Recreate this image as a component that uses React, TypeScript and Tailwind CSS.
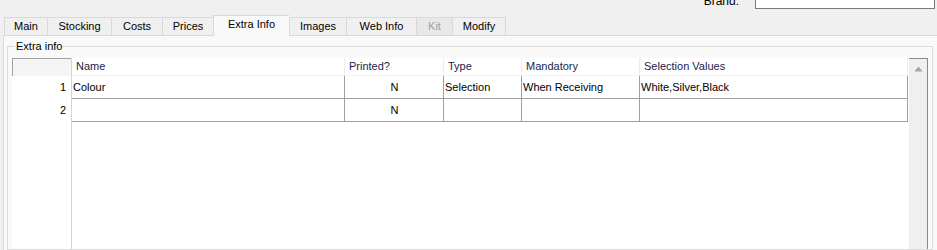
const tabs = [
  { label: 'Main', w: 'w-[43px]' },
  { label: 'Stocking', w: 'w-[64px]' },
  { label: 'Costs', w: 'w-[51px]' },
  { label: 'Prices', w: 'w-[51px]' },
  { label: 'Extra Info', w: 'w-[76px]', active: true },
  { label: 'Images', w: 'w-[57px]' },
  { label: 'Web Info', w: 'w-[70px]' },
  { label: 'Kit', w: 'w-[36px]', disabled: true },
  { label: 'Modify', w: 'w-[54px]', last: true },
]

const columns = [
  { label: 'Name', w: 'w-[273px]' },
  { label: 'Printed?', w: 'w-[99px]' },
  { label: 'Type', w: 'w-[78px]' },
  { label: 'Mandatory', w: 'w-[118px]' },
  { label: 'Selection Values', w: 'w-[268px]' },
]

const rows = [
  ['Colour', 'N', 'Selection', 'When Receiving', 'White,Silver,Black'],
  ['', 'N', '', '', ''],
]

function Tab({
  label,
  w,
  active,
  disabled,
  last,
}: {
  label: string
  w: string
  active?: boolean
  disabled?: boolean
  last?: boolean
}) {
  if (active) {
    return (
      <div
        className={`${w} relative z-10 -mb-px flex h-[21px] items-center justify-center border-l border-t border-[#d9d9d9] bg-[#f9f9f9] pb-[3px] text-black`}
      >
        {label}
      </div>
    )
  }
  return (
    <div
      className={`${w} flex h-[18px] items-center justify-center border-l border-t border-[#d9d9d9] ${
        last ? 'border-r' : ''
      } ${disabled ? 'bg-[#e8e8e8] text-[#a0a0a0]' : 'bg-[#f0f0f0] text-black'}`}
    >
      {label}
    </div>
  )
}

function ExtraInfoGrid() {
  return (
    <div className="flex h-full w-[916px] bg-white text-[11px]">
      <div className="flex w-[60px] flex-col border-r border-[#d5d5d5]">
        <div className="h-[18px] border-l border-t border-[#a0a0a0] bg-[#f5f5f5]" />
        {rows.map((_, i) => (
          <div
            key={i}
            className="flex h-[23px] items-center justify-end pr-[5px] text-black"
          >
            {i + 1}
          </div>
        ))}
      </div>
      <div className="flex w-[836px] flex-col">
        <div className="flex h-[18px] border-b border-[#f0f0f0]">
          {columns.map((c) => (
            <div
              key={c.label}
              className={`${c.w} flex items-center border-r border-[#ececec] pl-[4px] text-[#1c1c4c]`}
            >
              {c.label}
            </div>
          ))}
        </div>
        {rows.map((r, i) => (
          <div key={i} className="flex h-[23px] border-b border-[#a0a0a0]">
            {r.map((v, j) => (
              <div
                key={j}
                className={`${columns[j].w} flex items-center border-r border-[#a0a0a0] pl-[1px] text-black ${
                  j === 1 ? 'justify-center pl-0' : ''
                }`}
              >
                {v}
              </div>
            ))}
          </div>
        ))}
      </div>
      <div className="w-[1px]" />
      <div className="flex w-[19px] flex-col border-r border-t border-[#8a8a8a] bg-[#efefef]">
        <div className="flex h-[17px] items-center justify-center pt-[2px]">
          <svg width="9" height="6" viewBox="0 0 9 6">
            <path d="M4.5 0.5 L8.5 5.5 L0.5 5.5 Z" fill="#a3a3a3" />
          </svg>
        </div>
      </div>
    </div>
  )
}

export default function App() {
  return (
    <div
      className="flex h-[250px] w-[937px] flex-col overflow-hidden bg-[#f0f0f0] text-[11px]"
      style={{ fontFamily: '"Liberation Sans", Arial, sans-serif' }}
    >
      <div className="flex h-[15px] items-start justify-end overflow-hidden">
        <span className="-mt-[8px] mr-[16px] text-[12px] text-black">Brand:</span>
        <div className="mr-[2px] h-[9px] w-[180px] border-x border-b border-[#7a7a7a] bg-white" />
      </div>
      <div className="flex h-[20px] items-end pl-[4px]">
        {tabs.map((t) => (
          <Tab key={t.label} {...t} />
        ))}
      </div>
      <div className="ml-[3px] flex flex-1 flex-col border-l border-t border-[#d9d9d9] bg-[#f9f9f9]">
        <div className="relative ml-[3px] mt-[10px] flex w-[926px] flex-1 flex-col border border-[#dcdcdc] pl-[4px] pt-[11px]">
          <span className="absolute -top-[7px] left-[7px] bg-[#f9f9f9] px-[1px] leading-[13px] text-black">
            Extra info
          </span>
          <div className="flex-1">
            <ExtraInfoGrid />
          </div>
        </div>
      </div>
    </div>
  )
}
